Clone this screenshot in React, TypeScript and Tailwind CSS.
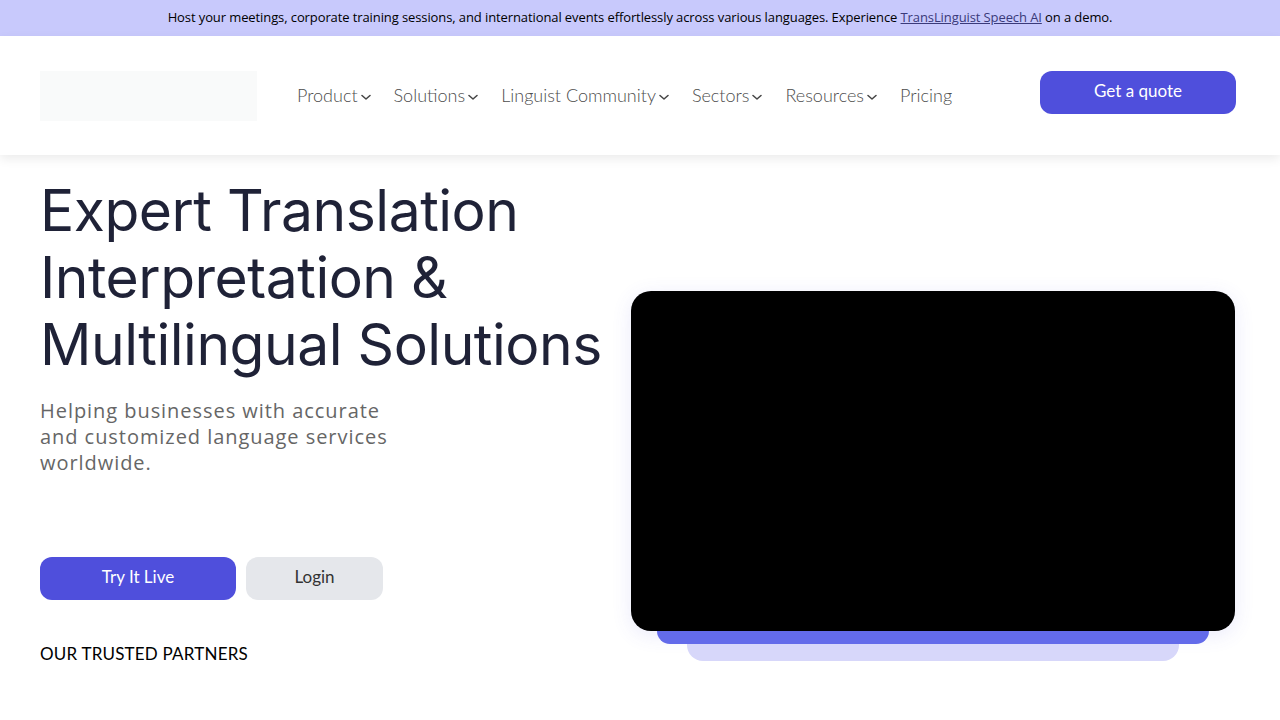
import React from 'react';

const navItems = [
   { label: 'Product', menu: true },
   { label: 'Solutions', menu: true },
   { label: 'Linguist Community', menu: true },
   { label: 'Sectors', menu: true },
   { label: 'Resources', menu: true },
   { label: 'Pricing', menu: false },
];

const Chevron: React.FC = () => (
   <svg width="10" height="7" viewBox="0 0 10 7" fill="none" className="ml-[3px] mt-[3px]">
      <path d="M1 1.5L5 5L9 1.5" stroke="#444" strokeWidth="1.5" strokeLinecap="round" strokeLinejoin="round" />
   </svg>
);

const App: React.FC = () => {
   return (
      <div className="min-h-screen bg-white" style={{ fontFamily: '"Open Sans", sans-serif' }}>
         {/* promo banner */}
         <div className="h-9 bg-[#c8c9fc] flex items-center justify-center text-[13px] text-black tracking-[-0.1px]">
            <span>
               Host your meetings, corporate training sessions, and international events effortlessly across various languages. Experience{' '}
               <a href="#" className="underline text-[#3a3a7a]">TransLinguist Speech AI</a> on a demo.
            </span>
         </div>

         {/* header */}
         <header className="h-[119px] bg-white shadow-[0_4px_10px_rgba(0,0,0,0.08)] relative z-10 flex items-center pl-10 pr-[44px]">
            <div className="w-[217px] h-[50px] bg-[#f9fafa]" />
            <nav className="flex items-center gap-[23px] ml-10 text-[18px] text-[#4d4d4d] font-light" style={{ fontFamily: 'Lato, sans-serif' }}>
               {navItems.map((item) => (
                  <div key={item.label} className="flex items-center">
                     <span>{item.label}</span>
                     {item.menu && <Chevron />}
                  </div>
               ))}
            </nav>
            <button className="ml-auto mb-[6px] w-[196px] h-[43px] rounded-xl bg-[#4f4fdc] text-white text-[17px] pb-[3px]" style={{ fontFamily: 'Lato, sans-serif' }}>
               Get a quote
            </button>
         </header>

         {/* hero */}
         <main className="flex pl-10 pr-[45px] pt-[22px]">
            <div className="w-[580px] shrink-0">
               <h1 className="text-[57px] leading-[67px] text-[#1f2237] tracking-[-0.5px] whitespace-nowrap" style={{ fontFamily: 'Inter, sans-serif' }}>
                  Expert Translation<br />
                  Interpretation &amp;<br />
                  Multilingual Solutions
               </h1>
               <p className="mt-[20px] max-w-[365px] text-[20px] leading-[26px] text-[#666] tracking-[0.95px]">
                  Helping businesses with accurate and customized language services worldwide.
               </p>
               <div className="flex gap-[10px] mt-[81px]">
                  <button className="w-[196px] h-[43px] rounded-xl bg-[#4f4fdc] text-white text-[17px] pb-[3px]" style={{ fontFamily: 'Lato, sans-serif' }}>
                     Try It Live
                  </button>
                  <button className="w-[137px] h-[43px] rounded-xl bg-[#e5e7eb] text-[#333] text-[17px] pb-[3px]" style={{ fontFamily: 'Lato, sans-serif' }}>
                     Login
                  </button>
               </div>
               <p className="mt-[42px] text-[17px] leading-[24px] text-black tracking-[0.2px]" style={{ fontFamily: 'Lato, sans-serif' }}>
                  OUR TRUSTED PARTNERS
               </p>
            </div>

            <div className="ml-auto pt-[114px] w-[604px] flex flex-col items-center">
               <div className="w-full h-[340px] bg-black rounded-[20px] shadow-[0_4px_20px_rgba(79,79,220,0.12)]" />
               <div className="w-[552px] h-[13px] bg-[#636bea] rounded-b-[13px]" />
               <div className="w-[492px] h-[17px] bg-[#d7d7fa] rounded-b-[16px]" />
            </div>
         </main>
      </div>
   );
};

export default App;
